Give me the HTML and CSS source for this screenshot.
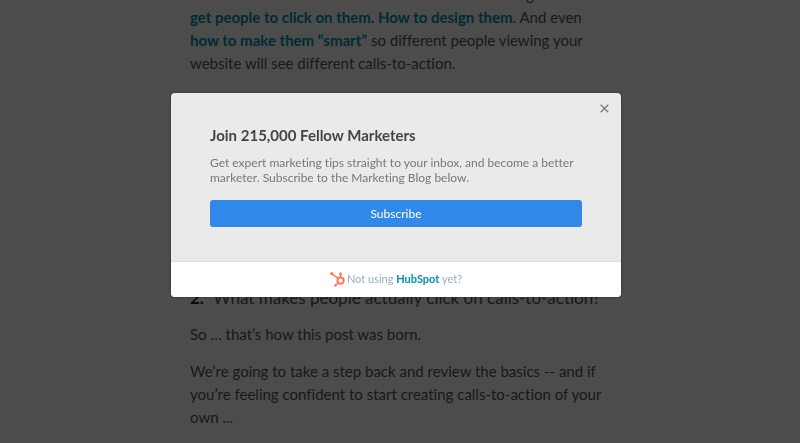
FILE: index.html
```html
<!DOCTYPE html>
<html lang="en">
<head>
    <meta charset="utf-8">
    <title>Marketing Blog</title>
    <link rel="stylesheet" href="styles.css">
</head>
<body>
    <main class="post">
        <p>And we will talk about how to use them and all things<br>
        <a href="#">get people to click on them. How to design them.</a> And even<br>
        <a href="#">how to make them “smart”</a> so different people viewing your<br>
        website will see different calls-to-action.</p>

        <ol class="questions">
            <li><b>2.</b> What makes people actually click on calls-to-action?</li>
        </ol>

        <p>So … that’s how this post was born.</p>

        <p>We’re going to take a step back and review the basics -- and if<br>
        you’re feeling confident to start creating calls-to-action of your<br>
        own ...</p>
    </main>

    <div class="overlay">
        <div class="modal" role="dialog" aria-labelledby="modal-title">
            <button class="close" type="button" aria-label="Close">
                <svg width="9" height="9" viewBox="0 0 9 9"><path d="M.7.7l7.6 7.6M8.3.7L.7 8.3" stroke="#777" stroke-width="1.3" fill="none"/></svg>
            </button>
            <div class="modal-body">
                <h2 id="modal-title">Join 215,000 Fellow Marketers</h2>
                <p>Get expert marketing tips straight to your inbox, and become a better<br>
                marketer. Subscribe to the Marketing Blog below.</p>
                <button class="subscribe" type="button">Subscribe</button>
            </div>
            <div class="modal-footer">
                <svg class="logo" width="15" height="15" viewBox="0 0 15 15" fill="none" stroke="#ff7a59">
                    <circle cx="10.5" cy="8.7" r="3.1" stroke-width="2"/>
                    <path d="M10.5 5.4V2M8.1 6.4L1.6 1.6M8.2 11L5.4 13.4" stroke-width="1.5"/>
                    <circle cx="10.5" cy="1.8" r="1.5" fill="#ff7a59" stroke="none"/>
                    <circle cx="1.6" cy="1.6" r="1.6" fill="#ff7a59" stroke="none"/>
                    <circle cx="5.4" cy="13.5" r="1.3" fill="#ff7a59" stroke="none"/>
                </svg>
                <span>Not using <a href="#">HubSpot</a> yet?</span>
            </div>
        </div>
    </div>
</body>
</html>
```

FILE: styles.css
```css
body {
    margin: 0;
    padding-right: 8px;
    height: 100vh;
    box-sizing: border-box;
    overflow: hidden;
    background: #fff;
    font-family: Lato, "Open Sans", sans-serif;
    font-variant-ligatures: none;
    color: #4a5868;
}
.post {
    max-width: 412px;
    margin: -17px auto 0;
    font-size: 15px;
    line-height: 23px;
    white-space: nowrap;
}
.post p {
    margin: 0 0 14px;
}
.post a {
    color: #0091ae;
    font-weight: bold;
    text-decoration: none;
}
.questions {
    margin: 211px 0 14px;
    padding: 0;
    list-style: none;
    font-size: 17px;
}
.questions li {
    display: flex;
    gap: 9px;
}
.questions b {
    color: #222;
}
.overlay {
    position: fixed;
    inset: 0;
    padding: 93px 8px 0 0;
    background: rgba(0, 0, 0, 0.7);
}
.modal {
    position: relative;
    max-width: 450px;
    margin: 0 auto;
    border-radius: 4px;
    background: #eaeaea;
    overflow: hidden;
    box-shadow: 0 0 3px rgba(0, 0, 0, 0.4);
}
.close {
    position: absolute;
    top: 7px;
    right: 8px;
    display: flex;
    padding: 4px;
    border: none;
    background: none;
    cursor: pointer;
}
.modal-body {
    padding: 32px 39px 34px;
}
.modal-body h2 {
    margin: 0 0 10px;
    font-size: 15px;
    line-height: 20px;
    color: #444;
}
.modal-body p {
    margin: 0 0 15px;
    font-size: 12px;
    line-height: 15px;
    color: #777;
    white-space: nowrap;
}
.subscribe {
    display: block;
    width: 100%;
    padding: 6px;
    border: none;
    border-radius: 3px;
    background: #3089e8;
    color: #fff;
    font-family: inherit;
    font-size: 12px;
    line-height: 15px;
    cursor: pointer;
}
.modal-footer {
    display: flex;
    align-items: center;
    justify-content: center;
    gap: 2px;
    padding: 9px 9px 10px;
    border-top: 1px solid #ddd;
    background: #fff;
    color: #99acc2;
    font-size: 11px;
    line-height: 16px;
}
.modal-footer a {
    color: #0091ae;
    font-weight: bold;
    text-decoration: none;
}
```
